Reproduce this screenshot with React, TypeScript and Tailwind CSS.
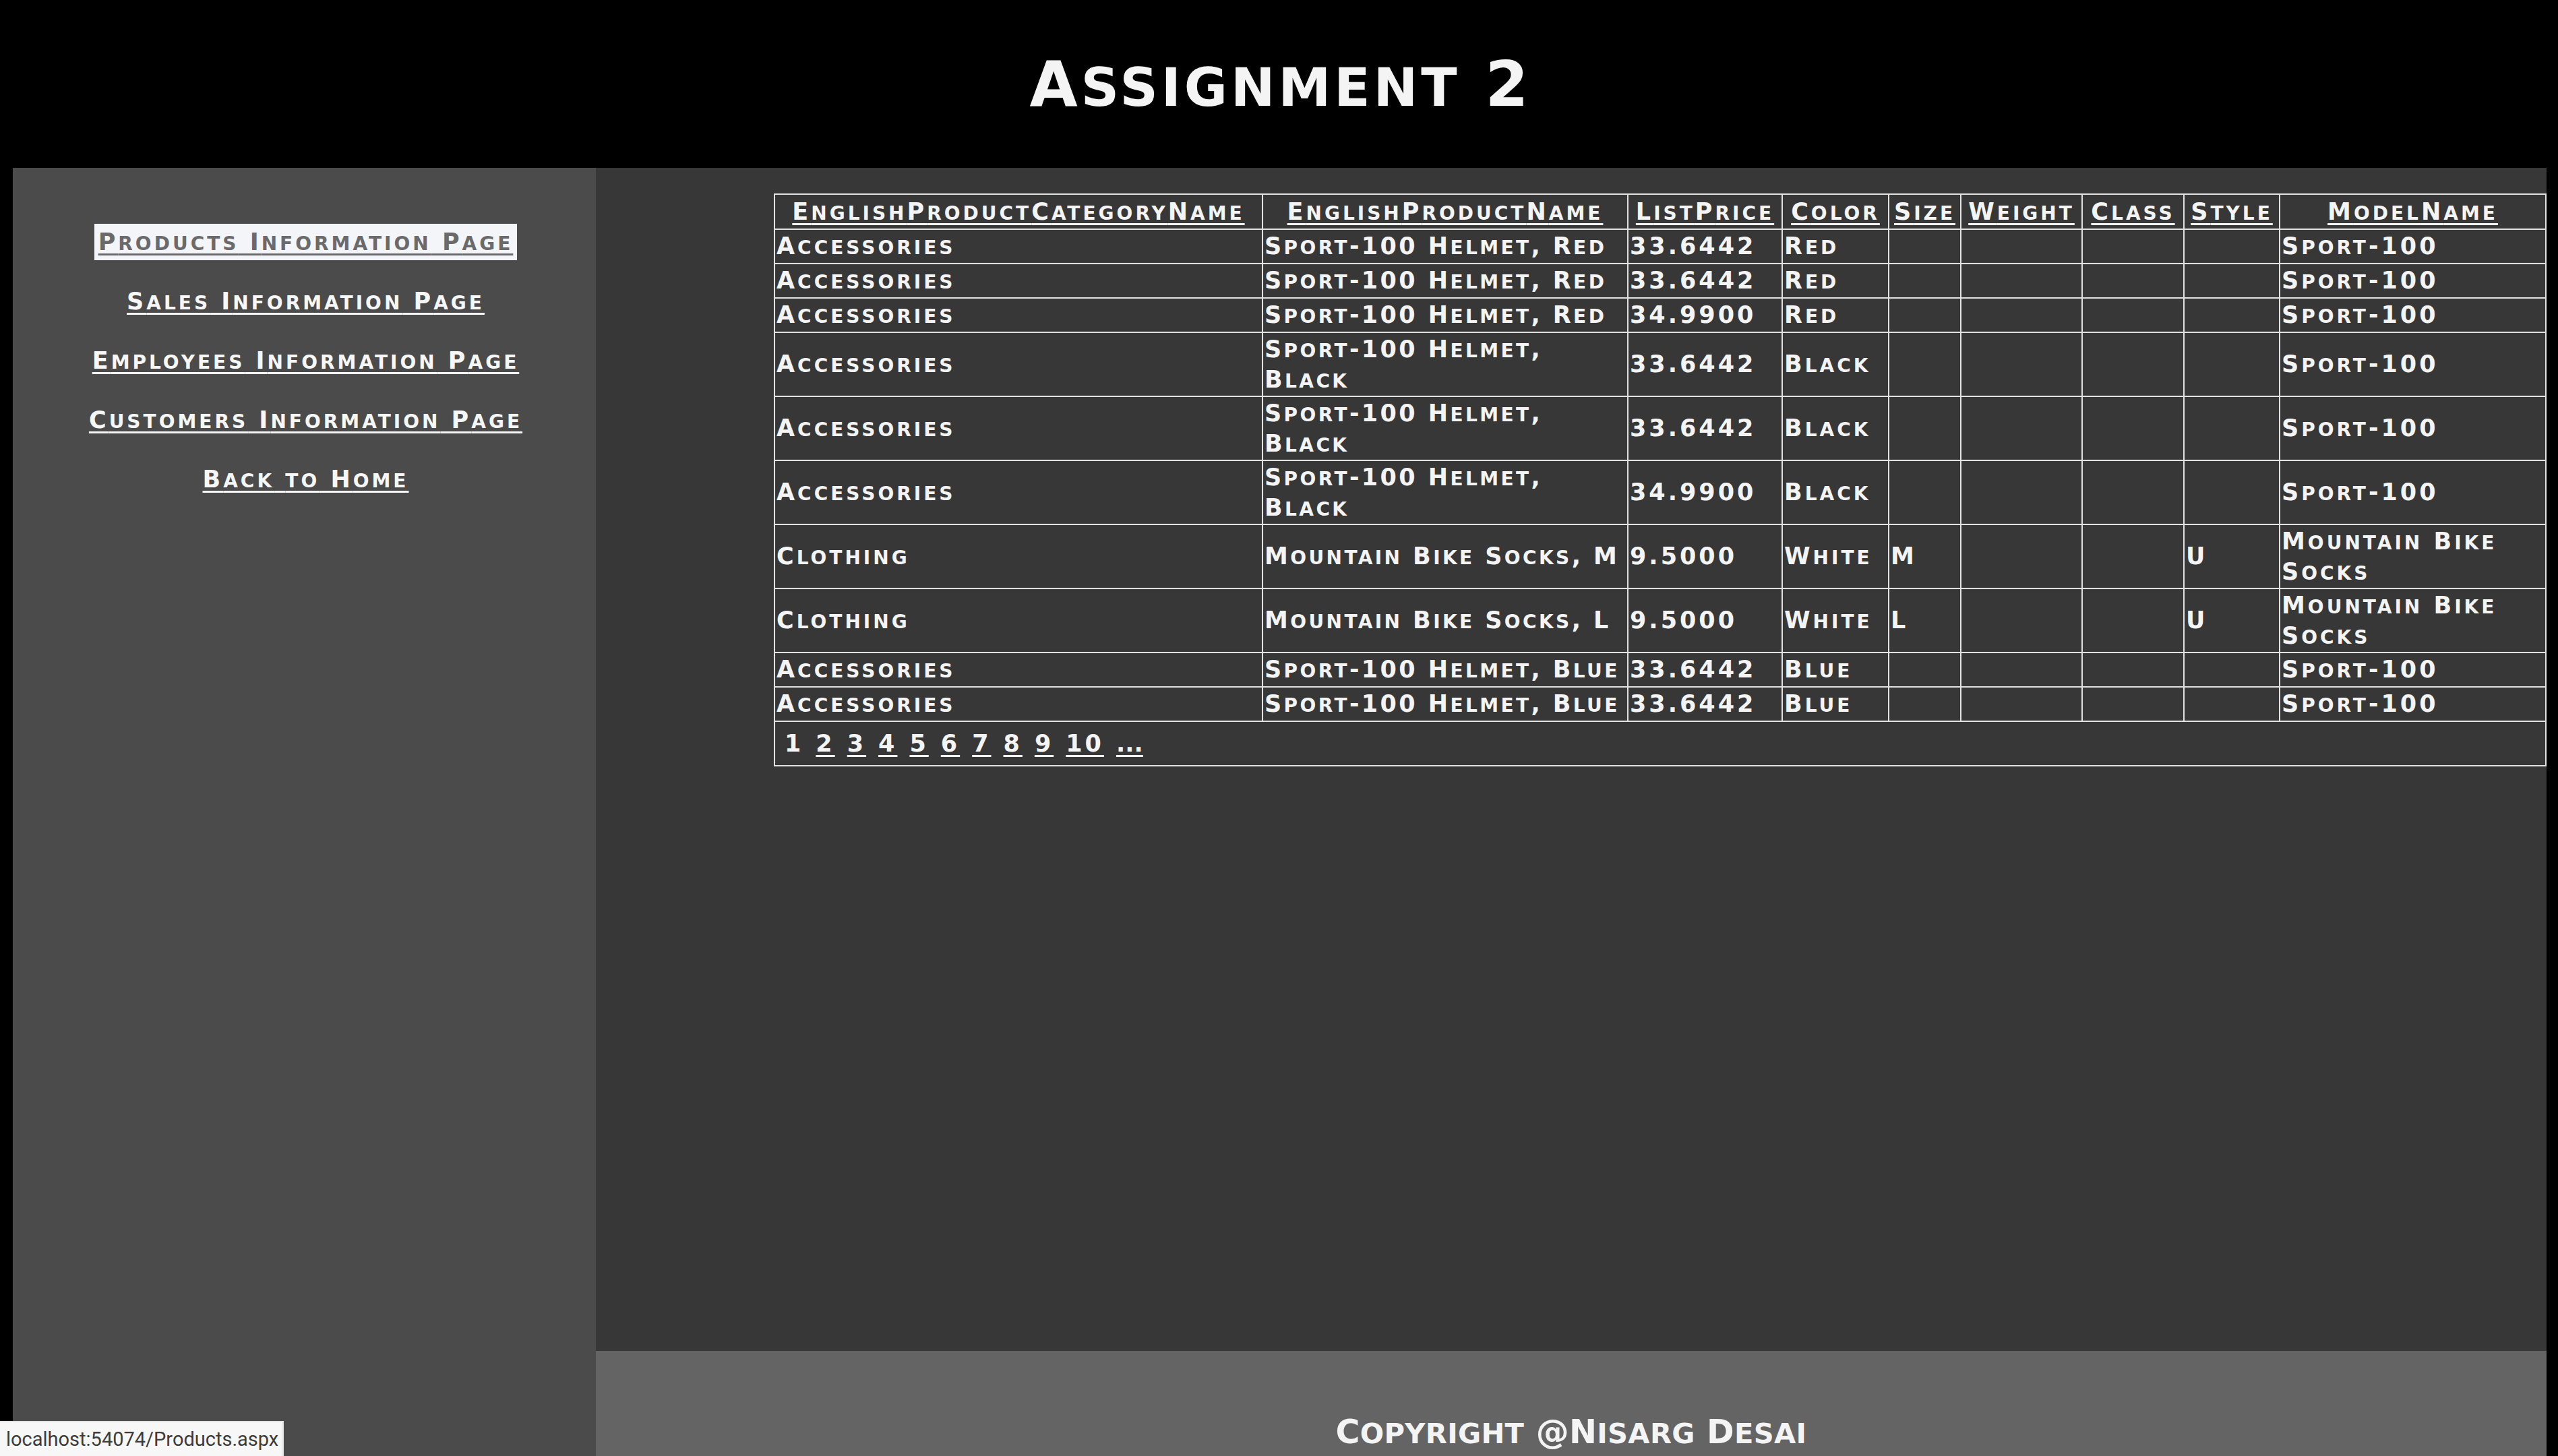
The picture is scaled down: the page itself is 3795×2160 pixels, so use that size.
import React from "react";

// Copperplate-like small caps: lowercase runs are shown as smaller capitals
function Sc({ t, big = false }: { t: string; big?: boolean }) {
  const parts = t.split(/([a-z]+)/);
  return (
    <>
      {parts.map((p, i) =>
        i % 2 === 1 ? (
          <span key={i} className={big ? "text-[0.85em] leading-none" : "text-[0.8em] leading-none"}>
            {p.toUpperCase()}
          </span>
        ) : (
          <React.Fragment key={i}>{p}</React.Fragment>
        )
      )}
    </>
  );
}

type Row = {
  cat: string;
  name: string[];
  price: string;
  color: string;
  size: string;
  style: string;
  model: string[];
  tall?: boolean;
};

const rows: Row[] = [
  { cat: "Accessories", name: ["Sport-100 Helmet, Red"], price: "33.6442", color: "Red", size: "", style: "", model: ["Sport-100"] },
  { cat: "Accessories", name: ["Sport-100 Helmet, Red"], price: "33.6442", color: "Red", size: "", style: "", model: ["Sport-100"] },
  { cat: "Accessories", name: ["Sport-100 Helmet, Red"], price: "34.9900", color: "Red", size: "", style: "", model: ["Sport-100"] },
  { cat: "Accessories", name: ["Sport-100 Helmet,", "Black"], price: "33.6442", color: "Black", size: "", style: "", model: ["Sport-100"], tall: true },
  { cat: "Accessories", name: ["Sport-100 Helmet,", "Black"], price: "33.6442", color: "Black", size: "", style: "", model: ["Sport-100"], tall: true },
  { cat: "Accessories", name: ["Sport-100 Helmet,", "Black"], price: "34.9900", color: "Black", size: "", style: "", model: ["Sport-100"], tall: true },
  { cat: "Clothing", name: ["Mountain Bike Socks, M"], price: "9.5000", color: "White", size: "M", style: "U", model: ["Mountain Bike", "Socks"], tall: true },
  { cat: "Clothing", name: ["Mountain Bike Socks, L"], price: "9.5000", color: "White", size: "L", style: "U", model: ["Mountain Bike", "Socks"], tall: true },
  { cat: "Accessories", name: ["Sport-100 Helmet, Blue"], price: "33.6442", color: "Blue", size: "", style: "", model: ["Sport-100"] },
  { cat: "Accessories", name: ["Sport-100 Helmet, Blue"], price: "33.6442", color: "Blue", size: "", style: "", model: ["Sport-100"] },
];

const heads = ["EnglishProductCategoryName", "EnglishProductName", "ListPrice", "Color", "Size", "Weight", "Class", "Style", "ModelName"];

const td = "border-2 border-[#e2e2e2] pl-[2px] pr-0 py-0 align-middle whitespace-nowrap leading-[45px]";
const tdName = "border-2 border-[#e2e2e2] pl-[2px] pr-0 py-0 align-middle whitespace-nowrap leading-[45px] tracking-[3.4px]";
const link = "underline decoration-[3px] underline-offset-[5px]";

function Lines({ v }: { v: string[] }) {
  return (
    <>
      {v.map((l, i) => (
        <React.Fragment key={i}>
          {i > 0 && <br />}
          <Sc t={l} />
        </React.Fragment>
      ))}
    </>
  );
}

const navItems = [
  "Products Information Page",
  "Sales Information Page",
  "Employees Information Page",
  "Customers Information Page",
  "Back to Home",
];

export default function App() {
  return (
    <div className="relative h-[2160px] w-[3795px] overflow-hidden bg-black font-['DejaVu_Sans',sans-serif] font-bold text-[#f4f4f4]">
      <header className="h-[249px] pt-[80px] pl-[5px] text-center">
        <h1 className="text-[92px] leading-[92px] tracking-[5px]">
          <Sc t="Assignment 2" big />
        </h1>
      </header>

      <div className="flex h-[1911px] pl-[19px] pr-[19px]">
        <aside className="w-[865px] shrink-0 bg-[#4b4b4b] pt-[83px] pl-[4px] text-[35px] tracking-[4px]">
          {navItems.map((n, i) => (
            <div key={n} className="flex h-[88px] items-start justify-center">
              <a
                href="#"
                className={
                  i === 0
                    ? "block bg-[#f4f5f9] px-[6px] py-[4px] leading-[46px] text-[#6a6a6c] underline decoration-[3px] underline-offset-[5px]"
                    : "block px-[6px] py-[4px] leading-[46px] text-[#f7f7f7] underline decoration-[3px] underline-offset-[5px]"
                }
              >
                <Sc t={n} />
              </a>
            </div>
          ))}
        </aside>

        <main className="flex flex-1 flex-col">
          <div className="flex-1 bg-[#373737] pt-[38px] pl-[264px]">
            <table className="w-[2628px] table-fixed border-collapse border-2 border-[#e2e2e2] text-[35px] tracking-[4px]">
              <colgroup>
                <col className="w-[724px]" />
                <col className="w-[542px]" />
                <col className="w-[229px]" />
                <col className="w-[158px]" />
                <col className="w-[107px]" />
                <col className="w-[180px]" />
                <col className="w-[151px]" />
                <col className="w-[142px]" />
                <col className="w-[395px]" />
              </colgroup>
              <thead>
                <tr className="h-[52px]">
                  {heads.map((h) => (
                    <th key={h} className="border-2 border-[#e2e2e2] px-0 py-0 text-center align-middle font-bold whitespace-nowrap leading-[45px]">
                      <a href="#" className={link}>
                        <Sc t={h} />
                      </a>
                    </th>
                  ))}
                </tr>
              </thead>
              <tbody>
                {rows.map((r, i) => (
                  <tr key={i} className={r.tall ? "h-[95px]" : "h-[51px]"}>
                    <td className={td}><Sc t={r.cat} /></td>
                    <td className={tdName}><Lines v={r.name} /></td>
                    <td className={td}>{r.price}</td>
                    <td className={td}><Sc t={r.color} /></td>
                    <td className={td}>{r.size}</td>
                    <td className={td}></td>
                    <td className={td}></td>
                    <td className={td}>{r.style}</td>
                    <td className={td}><Lines v={r.model} /></td>
                  </tr>
                ))}
                <tr className="h-[66px]">
                  <td colSpan={9} className="border-2 border-[#e2e2e2] py-0 pl-[14px] align-middle">
                    <div className="flex items-center gap-[18px] leading-[45px]">
                      <span>1</span>
                      {["2", "3", "4", "5", "6", "7", "8", "9", "10"].map((p) => (
                        <a key={p} href="#" className={link}>
                          {p}
                        </a>
                      ))}
                      <a href="#" className="tracking-normal underline decoration-[3px] underline-offset-[5px]">
                        ...
                      </a>
                    </div>
                  </td>
                </tr>
              </tbody>
            </table>
          </div>
          <footer className="h-[156px] shrink-0 bg-[#646464] pt-[96px] text-center text-[49px] leading-[49px] tracking-[0.3px]">
            <Sc t="Copyright @Nisarg Desai" big />
          </footer>
        </main>
      </div>

      <div className="absolute bottom-0 left-0 h-[52px] w-[421px] border-t-2 border-r-2 border-[#e3e3e3] bg-[#f7f7f8] pl-[9px] font-['Roboto',sans-serif] text-[29px] leading-[50px] font-normal text-[#3c3c3c]">
        localhost:54074/Products.aspx
      </div>
    </div>
  );
}
